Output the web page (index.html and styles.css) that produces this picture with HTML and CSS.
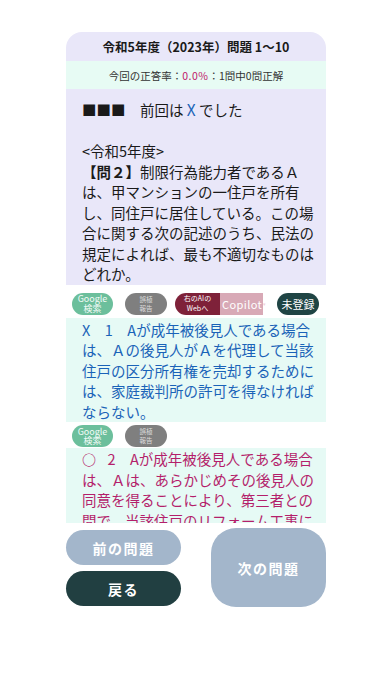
FILE: index.html
```html
<!DOCTYPE html>
<html lang="ja">
<head>
<meta charset="utf-8">
<link rel="stylesheet" href="styles.css">
</head>
<body>
<div class="app">
  <div class="title">令和5年度（2023年）問題 1～10</div>
  <div class="stats">今回の正答率：<span class="rate">0.0%</span>：1問中0問正解</div>
  <div class="scroll">
    <div class="question">
      <p>■■■　前回は <span class="blue">X</span> でした</p>
      <p>&nbsp;</p>
      <p>&lt;令和5年度&gt;<br><b>【問２】</b>制限行為能力者であるＡは、甲マンションの一住戸を所有し、同住戸に居住している。この場合に関する次の記述のうち、民法の規定によれば、最も不適切なものはどれか。</p>
    </div>
    <div class="tools tools-first">
      <span class="pill google">Google<br>検索</span>
      <span class="pill report">誤植<br>報告</span>
      <span class="ai"><span class="ai-web">右のAIの<br>Webへ</span><span class="ai-sel">Copilot<span class="caret">▾</span></span></span>
      <span class="pill unreg">未登録</span>
    </div>
    <div class="choice wrong">X　1　Aが成年被後見人である場合は、Ａの後見人がＡを代理して当該住戸の区分所有権を売却するためには、家庭裁判所の許可を得なければならない。</div>
    <div class="tools">
      <span class="pill google">Google<br>検索</span>
      <span class="pill report">誤植<br>報告</span>
    </div>
    <div class="choice right"><span class="mark">○</span>　2　Aが成年被後見人である場合は、Ａは、あらかじめその後見人の同意を得ることにより、第三者との間で、当該住戸のリフォーム工事に係る請負契約を締結することができる。</div>
  </div>
  <div class="nav">
    <div class="nav-left">
      <button class="btn prev">前の問題</button>
      <button class="btn back">戻る</button>
    </div>
    <button class="btn next">次の問題</button>
  </div>
</div>
</body>
</html>
```
FILE: styles.css
```css
* { box-sizing: border-box; }
body {
  margin: 0;
  background: #fff;
  font-family: "Noto Sans CJK JP", "Noto Sans", sans-serif;
  color: #222;
}
.app {
  width: 260px;
  margin: 32px auto 0;
}
.title {
  height: 29px;
  background: #e9e7f9;
  border-radius: 16px 16px 0 0;
  display: flex;
  align-items: center;
  justify-content: center;
  font-weight: bold;
  font-size: 12.5px;
  color: #1a1a1a;
}
.stats {
  height: 28px;
  background: #e7fbf4;
  display: flex;
  align-items: center;
  justify-content: center;
  font-size: 10.5px;
  color: #333;
}
.rate { color: #c0166a; letter-spacing: 0.5px; }
.scroll {
  height: 434px;
  overflow: hidden;
}
.question {
  background: #e9e7f9;
  padding: 10px 8px 0 16px;
  font-size: 14.5px;
  line-height: 20.5px;
  color: #1a1a1a;
}
.question p { margin: 0; }
.question b { font-weight: bold; }
.blue { color: #1a63b8; font-size: 15.5px; }
.tools {
  display: flex;
  align-items: center;
  gap: 12px;
  padding: 3px 0 1px 6px;
}
.tools-first { padding: 8px 0 3px 6px; }
.pill {
  display: flex;
  align-items: center;
  justify-content: center;
  text-align: center;
  height: 22px;
  border-radius: 11px;
  color: #fff;
}
.google {
  width: 41px;
  background: #6cbf9c;
  font-size: 9px;
  line-height: 9.5px;
  color: #f2fbf7;
}
.report {
  width: 42px;
  background: #7f7f7f;
  font-size: 6.5px;
  line-height: 9px;
  color: #dcdcdc;
}
.ai {
  display: flex;
  height: 22px;
  margin-left: -4px;
}
.ai-web {
  width: 45px;
  background: #7e2139;
  border-radius: 11px 0 0 11px;
  color: #fff;
  font-size: 7px;
  line-height: 9.5px;
  display: flex;
  align-items: center;
  justify-content: center;
  text-align: center;
}
.ai-sel {
  width: 43px;
  background: #d8a9b6;
  color: #fff;
  font-size: 11px;
  display: flex;
  align-items: center;
  padding-left: 2px;
  letter-spacing: 0.4px;
}
.caret { font-size: 5px; color: #f0d0da; margin-left: 1px; }
.unreg {
  width: 42px;
  margin-left: 2px;
  background: #1f4444;
  font-size: 11px;
}
.choice {
  padding: 2px 8px 0 16px;
  font-size: 14.5px;
  line-height: 20.5px;
  background: #e6faf5;
}
.wrong { color: #1a63b8; }
.right { color: #b41f6b; padding-top: 1px; }
.mark {
  display: inline-block;
  width: 11px;
  font-size: 14px;
  font-weight: bold;
  line-height: 1;
}
.nav {
  display: flex;
  justify-content: space-between;
  align-items: flex-start;
  margin-top: 5px;
}
.nav-left {
  display: flex;
  flex-direction: column;
  gap: 6px;
  padding-top: 2px;
}
.btn {
  border: none;
  color: #fff;
  font-family: "Noto Sans CJK JP", sans-serif;
  font-weight: bold;
  font-size: 14px;
  letter-spacing: 1.5px;
  width: 115px;
}
.prev { height: 35px; border-radius: 18px; background: #a3b6cb; }
.back { height: 35px; border-radius: 18px; background: #213f41; }
.next { height: 79px; border-radius: 25px; background: #a3b6cb; }
```
